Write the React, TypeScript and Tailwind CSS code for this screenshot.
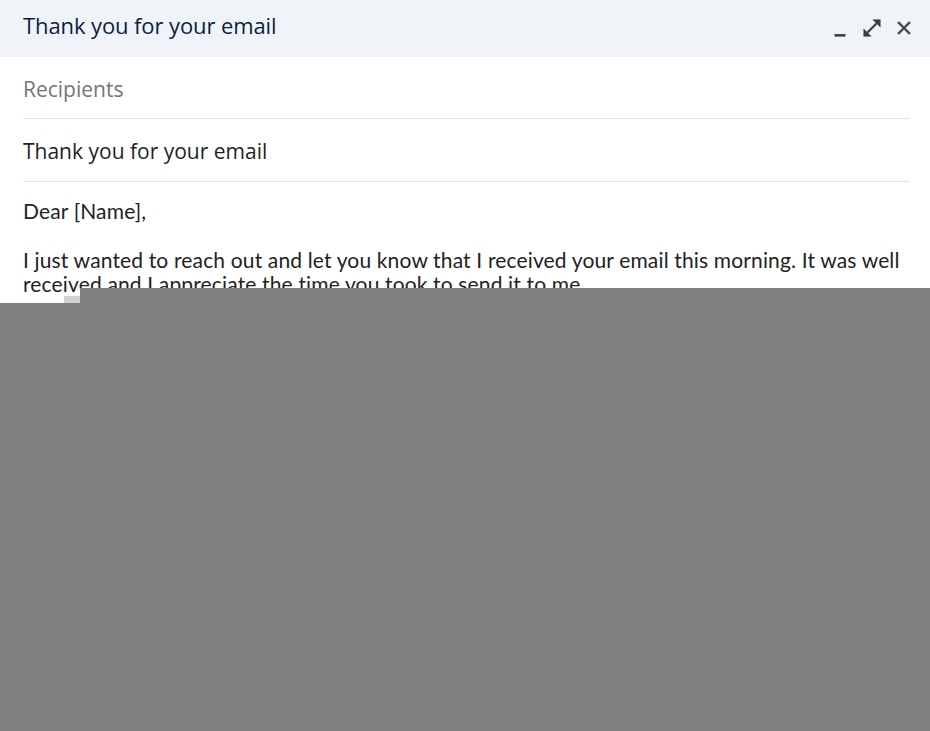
export default function App() {
  return (
    <div className="relative min-h-screen h-[731px] overflow-hidden bg-white">
      {/* header */}
      <div className="flex h-[57px] items-center justify-between bg-[#f0f4f9] pb-[6px] pl-[23px] pr-[15px]">
        <h1 className="text-[22px] text-[#0b1f3f] font-['Open_Sans',sans-serif] tracking-[-0.1px]">
          Thank you for your email
        </h1>
        <div className="flex items-center gap-[10px] pt-[4px] text-[#3c3f41]">
          <svg width="22" height="22" viewBox="0 0 24 24" fill="currentColor">
            <path d="M6 18.6h12v2.8H6z" />
          </svg>
          <svg width="22" height="22" viewBox="0 0 24 24" fill="currentColor">
            <path d="M21 11V3h-8l3.29 3.29-10 10L3 13v8h8l-3.29-3.29 10-10z" stroke="currentColor" strokeWidth="0.6" />
          </svg>
          <svg width="22" height="22" viewBox="0 0 24 24" fill="currentColor">
            <path d="M19 6.41L17.59 5 12 10.59 6.41 5 5 6.41 10.59 12 5 17.59 6.41 19 12 13.41 17.59 19 19 17.59 13.41 12z" stroke="currentColor" strokeWidth="0.6" />
          </svg>
        </div>
      </div>

      <div className="pl-[23px] pr-[20px]">
        <div className="flex h-[62px] items-center border-b border-[#e3e3e3] pt-[4px] text-[21px] text-[#757575] font-['Open_Sans',sans-serif]">
          Recipients
        </div>
        <div className="flex h-[63px] items-center border-b border-[#e3e3e3] pt-[4px] text-[21px] text-[#1f1f1f] font-['Open_Sans',sans-serif]">
          Thank you for your email
        </div>
        <div className="pt-[17px] text-[21px] leading-[24px] tracking-[0.15px] text-[#222] font-['Lato',sans-serif]">
          <p>Dear [Name],</p>
          <p className="mt-[25px]">
            I just wanted to reach out and let you know that I received your email this morning. It was well
            received and I appreciate the time you took to send it to me.
          </p>
        </div>
      </div>

      {/* grey cover */}
      <div className="absolute left-[80px] right-0 top-[288px] h-[16px] bg-[#808080]" />
      <div className="absolute left-[64px] top-[296px] h-[8px] w-[16px] bg-[#d2d2d2]" />
      <div className="absolute inset-x-0 bottom-0 top-[303px] bg-[#808080]" />
    </div>
  );
}
